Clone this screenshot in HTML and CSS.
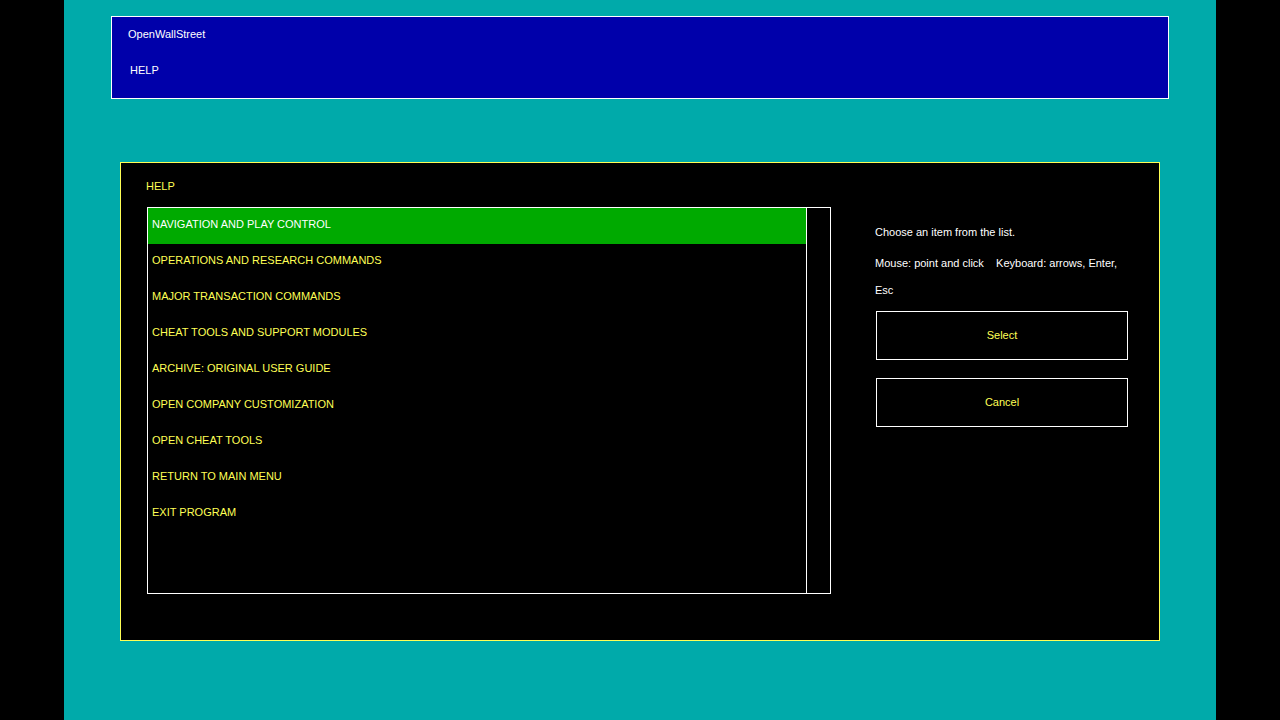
FILE: index.html
```html
<!DOCTYPE html>
<html>
<head lang="en">
    <meta charset="UTF-8">
    <title>OpenWallStreet - Help</title>
    <link rel="stylesheet" href="styles.css">
</head>
<body>
<div class="screen">
    <div class="header">
        <p class="app-name">OpenWallStreet</p>
        <p class="page-name">HELP</p>
    </div>

    <div class="dialog">
        <p class="dialog-title">HELP</p>
        <div class="dialog-body">
            <div class="list-box">
                <ul class="menu">
                    <li class="selected">NAVIGATION AND PLAY CONTROL</li>
                    <li>OPERATIONS AND RESEARCH COMMANDS</li>
                    <li>MAJOR TRANSACTION COMMANDS</li>
                    <li>CHEAT TOOLS AND SUPPORT MODULES</li>
                    <li>ARCHIVE: ORIGINAL USER GUIDE</li>
                    <li>OPEN COMPANY CUSTOMIZATION</li>
                    <li>OPEN CHEAT TOOLS</li>
                    <li>RETURN TO MAIN MENU</li>
                    <li>EXIT PROGRAM</li>
                </ul>
                <div class="scrollbar"></div>
            </div>
            <div class="side">
                <p class="hint">Choose an item from the list.</p>
                <p class="hint keys">Mouse: point and click    Keyboard: arrows, Enter, Esc</p>
                <button class="btn">Select</button>
                <button class="btn">Cancel</button>
            </div>
        </div>
    </div>
</div>
</body>
</html>
```

FILE: styles.css
```css
body, html {
    margin: 0;
    background: #000;
}

body {
    font-family: "Liberation Sans", Arial, sans-serif;
    font-size: 11px;
}

p {
    margin: 0;
}

.screen {
    width: 1152px;
    min-height: 720px;
    margin: 0 auto;
    background: #00aaaa;
    padding-top: 16px;
    box-sizing: border-box;
    overflow: hidden;
}

/* Top bar */
.header {
    margin-left: 47px;
    width: 1058px;
    height: 83px;
    box-sizing: border-box;
    border: 1px solid #fff;
    background: #0000aa;
    color: #fff;
    padding: 10px 0 0 16px;
}

.app-name {
    line-height: 15px;
}

.page-name {
    margin: 21px 0 0 2px;
    line-height: 15px;
}

/* Help dialog */
.dialog {
    margin: 63px 0 0 56px;
    width: 1040px;
    height: 479px;
    box-sizing: border-box;
    border: 1px solid #ffff55;
    background: #000;
    padding: 16px 0 0 26px;
}

.dialog-title {
    color: #ffff55;
    line-height: 15px;
    margin-bottom: 13px;
    margin-left: -1px;
}

.dialog-body {
    display: flex;
}

.list-box {
    display: flex;
    width: 684px;
    height: 387px;
    box-sizing: border-box;
    border: 1px solid #fff;
}

.menu {
    list-style: none;
    margin: 0;
    padding: 0;
    width: 658px;
    border-right: 1px solid #fff;
}

.menu li {
    height: 36px;
    line-height: 33px;
    padding-left: 4px;
    color: #ffff55;
}

.menu li.selected {
    background: #00aa00;
    color: #fff;
}

.scrollbar {
    flex: 1;
}

.side {
    display: flex;
    flex-direction: column;
    align-items: flex-start;
    margin: 12px 0 0 44px;
    width: 254px;
}

.hint {
    color: #fff;
    line-height: 27px;
    white-space: pre-wrap;
    width: 254px;
}

.hint.keys {
    margin-top: 4px;
}

.btn {
    margin: 7px 0 0 1px;
    width: 252px;
    height: 49px;
    background: #000;
    border: 1px solid #fff;
    color: #ffff55;
    font-family: inherit;
    font-size: 11px;
    padding: 0 0 2px;
}

.btn + .btn {
    margin-top: 18px;
}
```
